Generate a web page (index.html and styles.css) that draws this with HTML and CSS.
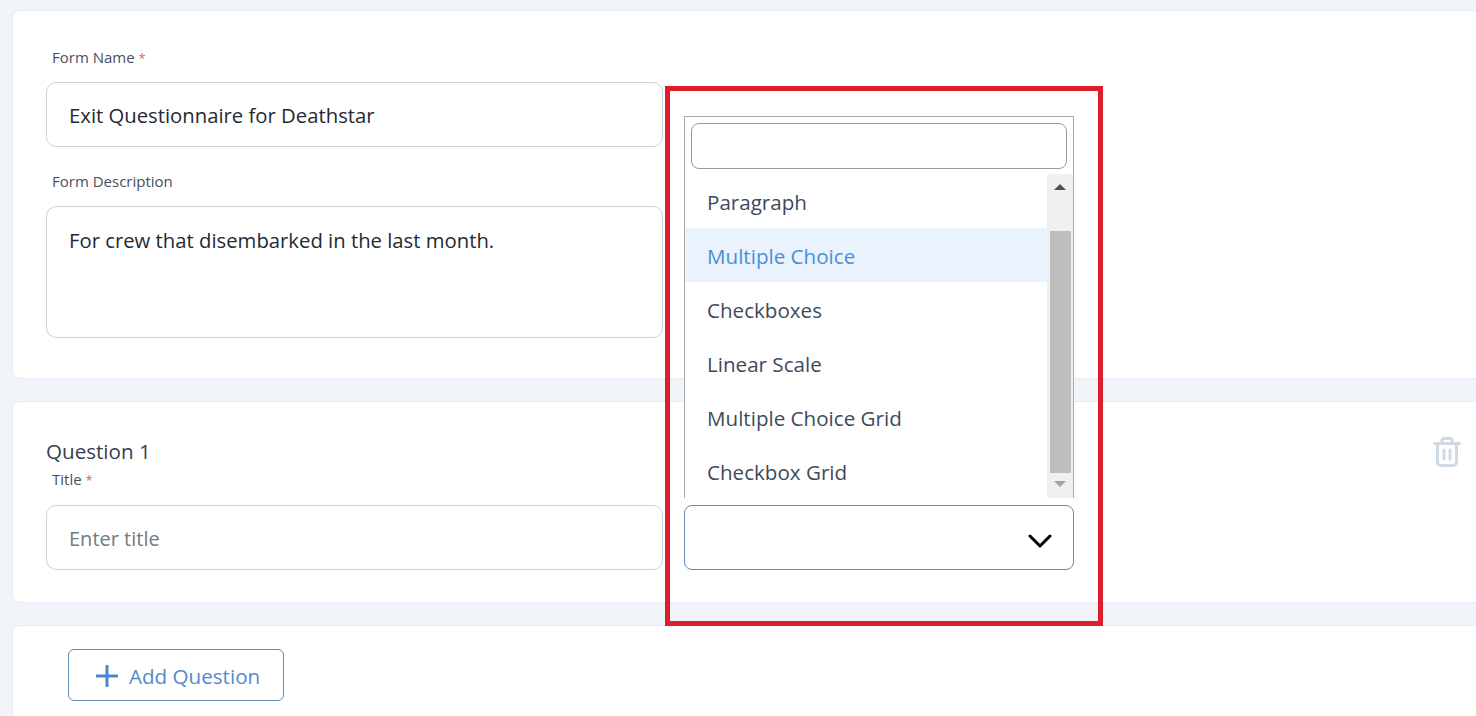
FILE: index.html
```html
<!DOCTYPE html>
<html lang="en">
<head>
<meta charset="utf-8">
<title>Exit Questionnaire</title>
<link rel="stylesheet" href="styles.css">
</head>
<body>
<main class="page">
  <section class="card card-form">
    <div class="label">Form Name <span class="req">*</span></div>
    <input class="control name-input" type="text" value="Exit Questionnaire for Deathstar">
    <div class="label label-desc">Form Description</div>
    <textarea class="control desc-input">For crew that disembarked in the last month.</textarea>
  </section>

  <section class="card card-question">
    <div class="q-head">
      <h2 class="q-title">Question 1</h2>
      <svg class="trash" width="28" height="30" viewBox="0 0 28 30" fill="none" stroke="#d0d9e4" stroke-width="3" stroke-linecap="round" stroke-linejoin="round">
        <path d="M1.5 6.5h25"/>
        <path d="M9 6V3.5a2 2 0 0 1 2-2h6a2 2 0 0 1 2 2V6"/>
        <path d="M4.5 7v18a3.5 3.5 0 0 0 3.5 3.5h12a3.5 3.5 0 0 0 3.5-3.5V7"/>
        <path d="M11 13v9M17 13v9"/>
      </svg>
    </div>
    <div class="q-row">
      <div class="q-field">
        <div class="label">Title <span class="req">*</span></div>
        <input class="control title-input" type="text" placeholder="Enter title">
      </div>
      <div class="select-wrap">
        <div class="dropdown">
          <input class="search" type="text">
          <div class="list-wrap">
            <ul class="list">
              <li>Paragraph</li>
              <li class="active">Multiple Choice</li>
              <li>Checkboxes</li>
              <li>Linear Scale</li>
              <li>Multiple Choice Grid</li>
              <li>Checkbox Grid</li>
            </ul>
            <div class="scrollbar">
              <span class="arrow arrow-up"></span>
              <span class="thumb"></span>
              <span class="arrow arrow-down"></span>
            </div>
          </div>
        </div>
        <div class="select">
          <svg width="24" height="14" viewBox="0 0 24 14" fill="none" stroke="#000" stroke-width="3" stroke-linecap="round" stroke-linejoin="round"><path d="M2 2l10 10L22 2"/></svg>
        </div>
      </div>
    </div>
  </section>

  <section class="card card-add">
    <button class="add-btn" type="button">
      <svg width="22" height="22" viewBox="0 0 22 22" fill="none" stroke="#4a86d0" stroke-width="3" stroke-linecap="round"><path d="M11 1v20M1 11h20"/></svg>
      <span>Add Question</span>
    </button>
  </section>

  <div class="annotation"></div>
</main>
</body>
</html>
```

FILE: styles.css
```css
* { box-sizing: border-box; }

html, body { margin: 0; height: 100%; }

body {
  overflow: hidden;
  background: #f1f4f9;
  font-family: "Open Sans", "Noto Sans", sans-serif;
  color: #3a4557;
}

.page {
  position: relative;
  width: 1496px;
  height: 716px;
  padding: 10px 0 0 12px;
  display: flex;
  flex-direction: column;
  gap: 22px;
}

.card {
  background: #fff;
  border: 1px solid #e8ecf2;
  border-radius: 8px;
  padding-left: 33px;
  padding-right: 34px;
}

.card-form { height: 369px; padding-top: 36px; }
.card-question { height: 202px; padding-top: 35px; }
.card-add {
  flex: 1;
  padding-top: 23px;
  padding-left: 55px;
  border-bottom: 0;
  border-radius: 8px 8px 0 0;
}

.label {
  margin-left: 6px;
  font-size: 15px;
  font-weight: 400;
  line-height: 20px;
  color: #47505e;
}

.label-desc { margin-top: 24px; }

.req { color: #e0606a; font-size: 13px; line-height: 0; }

.control {
  display: block;
  width: 617px;
  margin-top: 15px;
  border: 1px solid #cdd3de;
  border-radius: 10px;
  background: #fff;
  padding: 0 22px;
  font-family: inherit;
  font-size: 20.3px;
  color: #232a33;
  outline: none;
}

.name-input { height: 65px; }

.desc-input {
  height: 132px;
  padding-top: 18px;
  line-height: 30px;
  resize: none;
}

.title-input {
  height: 65px;
  margin-top: 16px;
  padding-top: 2px;
  font-size: 20px;
}
.title-input::placeholder { color: #747a80; opacity: 1; }

.q-head {
  display: flex;
  align-items: center;
  justify-content: space-between;
  height: 30px;
}

.q-title {
  margin: 0 0 2px;
  font-size: 20.6px;
  font-weight: 400;
  line-height: 28px;
  color: #36404f;
}

.trash { display: block; }

.q-row {
  margin-top: 2px;
  display: flex;
  align-items: flex-end;
  gap: 21px;
}

.select-wrap { position: relative; width: 390px; }

.select {
  height: 65px;
  border: 1px solid #5f8db5;
  border-radius: 8px;
  background: #fff;
  display: flex;
  align-items: center;
  justify-content: flex-end;
  padding: 6px 21px 0 0;
}

.dropdown {
  position: absolute;
  left: 0;
  right: 0;
  bottom: 72px;
  z-index: 2;
  height: 382px;
  background: #fff;
  border: 1px solid #aaa;
  border-bottom: 0;
  display: flex;
  flex-direction: column;
}

.search {
  flex: none;
  display: block;
  width: 376px;
  height: 46px;
  margin: 6px 6px 5px;
  border: 1px solid #9b9b9b;
  border-radius: 8px;
  background: #fff;
  outline: none;
}

.list-wrap { flex: 1; display: flex; }

.list {
  flex: 1;
  margin: 0;
  padding: 0;
  list-style: none;
}

.list li {
  height: 54px;
  padding-left: 22px;
  font-size: 20.6px;
  line-height: 56px;
  color: #3d4a5c;
}

.list li.active { background: #e9f2fd; color: #4a8fd6; }

.scrollbar {
  flex: none;
  width: 26px;
  background: #f0f0f0;
  display: flex;
  flex-direction: column;
  align-items: center;
}

.thumb {
  flex: none;
  width: 21px;
  height: 242px;
  margin: 0 0 8px;
  background: #bebebe;
}

.arrow {
  flex: none;
  width: 0;
  height: 0;
  border-left: 6px solid transparent;
  border-right: 6px solid transparent;
}

.arrow-up { margin: 10px 0 41px; border-bottom: 6px solid #505050; }
.arrow-down { border-top: 6px solid #a3a3a3; }

.add-btn {
  display: flex;
  align-items: center;
  gap: 11px;
  width: 216px;
  height: 52px;
  padding: 2px 0 0 27px;
  border: 1px solid #5f8db5;
  border-radius: 6px;
  background: #fff;
  font-family: inherit;
  font-size: 20.6px;
  color: #5488cf;
}

.annotation {
  position: absolute;
  left: 665px;
  top: 86px;
  width: 438px;
  height: 540px;
  border: 5px solid #dd1f2d;
  pointer-events: none;
  z-index: 3;
}
```
